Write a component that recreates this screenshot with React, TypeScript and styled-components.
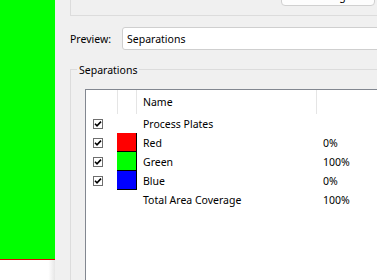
import React from "react";
import styled, { createGlobalStyle } from "styled-components";

const Global = createGlobalStyle`
  html, body { margin: 0; padding: 0; background: #f0f0f0; }
  #root { width: 377px; height: 280px; overflow: hidden; }
`;

const Frame = styled.div`
  display: flex;
  width: 377px;
  height: 280px;
  overflow: hidden;
  font-family: "Noto Sans", "DejaVu Sans", sans-serif;
  font-size: 10.5px;
  color: #000;
`;

const PreviewPane = styled.div`
  width: 55px;
  flex: none;
  display: flex;
  flex-direction: column;
`;

const GreenArea = styled.div`
  height: 259px;
  background: #00ff00;
  border-bottom: 1px solid #e00000;
`;

const WhiteArea = styled.div`
  flex: 1;
  background: linear-gradient(to right, #ffffff 88%, #e6e6e6);
`;

const Side = styled.div`
  flex: 1;
  min-width: 0;
  background: #f0f0f0;
  padding-left: 15px;
  display: flex;
  flex-direction: column;
  overflow: hidden;
`;

const TopGroup = styled.div`
  box-sizing: border-box;
  height: 47px;
  margin-top: -31px;
  border-left: 1px solid #dcdcdc;
  border-bottom: 1px solid #dcdcdc;
  display: flex;
  justify-content: flex-end;
  align-items: flex-end;
  padding: 0 2px 9px 0;
`;

const PushButton = styled.div`
  box-sizing: border-box;
  width: 94px;
  height: 26px;
  border: 1px solid #d0d0d0;
  border-radius: 4px;
  background: #fdfdfd;
  display: flex;
  align-items: flex-end;
  justify-content: center;
  padding-bottom: 3px;
  line-height: 12px;
`;

const PreviewRow = styled.div`
  margin-top: 11px;
  height: 23px;
  display: flex;
  align-items: center;
`;

const FieldLabel = styled.span`
  width: 52px;
  flex: none;
`;

const Dropdown = styled.div`
  box-sizing: border-box;
  flex: 1;
  height: 23px;
  margin-right: -10px;
  background: #fff;
  border: 1px solid #cfcfcf;
  border-radius: 3px;
  padding-left: 4px;
  display: flex;
  align-items: center;
`;

const GroupBox = styled.div`
  margin-top: 19px;
  margin-right: -10px;
  flex: 1;
  border-top: 1px solid #dcdcdc;
  border-left: 1px solid #dcdcdc;
  display: flex;
  flex-direction: column;
`;

const Legend = styled.span`
  align-self: flex-start;
  margin: -7px 0 0 6px;
  padding: 0 2px;
  line-height: 15px;
  background: #f0f0f0;
`;

const ListBox = styled.div`
  margin: 11px 0 0 14px;
  flex: 1;
  background: #fff;
  border-top: 1px solid #828790;
  border-left: 1px solid #828790;
`;

const Row = styled.div<{ $header?: boolean }>`
  display: grid;
  grid-template-columns: 31px 20px 180px 1fr;
  height: ${(p) => (p.$header ? 24 : 19)}px;
  align-items: stretch;
`;

const Cell = styled.div<{ $sepLeft?: boolean; $sepRight?: boolean; $pad?: number }>`
  box-sizing: border-box;
  display: flex;
  align-items: center;
  padding-left: ${(p) => p.$pad ?? 0}px;
  border-left: ${(p) => (p.$sepLeft ? "1px solid #e5e5e5" : "none")};
  border-right: ${(p) => (p.$sepRight ? "1px solid #e5e5e5" : "none")};
  white-space: nowrap;
`;

const TextCell = styled(Cell)`
  padding-top: 1px;
`;

const Swatch = styled.div<{ $color: string }>`
  box-sizing: border-box;
  background: ${(p) => p.$color};
  border-right: 1px solid #000;
  border-bottom: 1px solid #000;
`;

const CheckBox = styled.span`
  box-sizing: border-box;
  width: 10px;
  height: 10px;
  border: 1px solid #6e6e6e;
  background: #fff;
  display: flex;
  align-items: center;
  justify-content: center;
`;

const Check = () => (
  <CheckBox>
    <svg width="8" height="8" viewBox="0 0 8 8">
      <path d="M1 3.8 L3 5.8 L7 1.6" fill="none" stroke="#000" strokeWidth="1.6" />
    </svg>
  </CheckBox>
);

type Plate = { name: string; color?: string; pct?: string; checked: boolean };

const plates: Plate[] = [
  { name: "Process Plates", checked: true },
  { name: "Red", color: "#ff0000", pct: "0%", checked: true },
  { name: "Green", color: "#00ff00", pct: "100%", checked: true },
  { name: "Blue", color: "#0000ff", pct: "0%", checked: true },
  { name: "Total Area Coverage", pct: "100%", checked: false },
];

export default function App() {
  return (
    <Frame>
      <Global />
      <PreviewPane>
        <GreenArea />
        <WhiteArea />
      </PreviewPane>
      <Side>
        <TopGroup>
          <PushButton>Ink Manager...</PushButton>
        </TopGroup>
        <PreviewRow>
          <FieldLabel>Preview:</FieldLabel>
          <Dropdown>Separations</Dropdown>
        </PreviewRow>
        <GroupBox>
          <Legend>Separations</Legend>
          <ListBox>
            <Row $header>
              <Cell />
              <Cell $sepLeft $sepRight />
              <Cell $sepRight $pad={6}>Name</Cell>
              <Cell />
            </Row>
            {plates.map((p) => (
              <Row key={p.name}>
                <Cell $pad={7}>{p.checked && <Check />}</Cell>
                {p.color ? <Swatch $color={p.color} /> : <Cell />}
                <TextCell $pad={6}>{p.name}</TextCell>
                <TextCell $pad={6}>{p.pct}</TextCell>
              </Row>
            ))}
          </ListBox>
        </GroupBox>
      </Side>
    </Frame>
  );
}
